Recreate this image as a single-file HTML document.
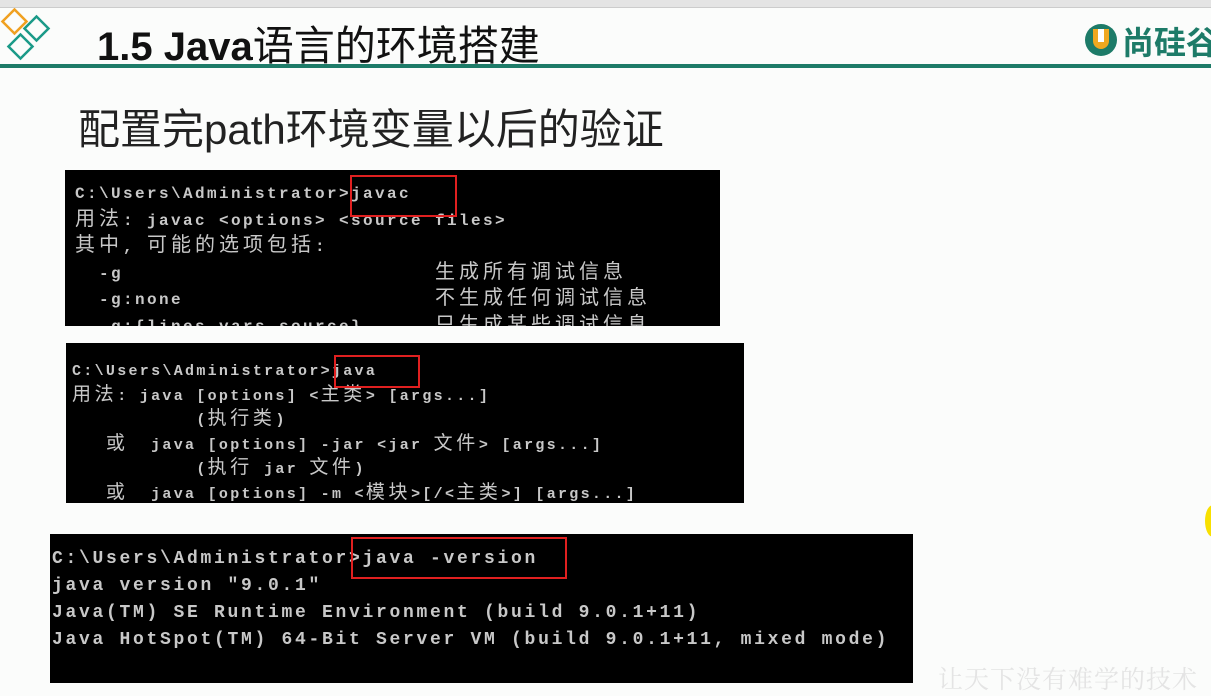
<!DOCTYPE html>
<html><head><meta charset="utf-8"><style>
*{margin:0;padding:0;box-sizing:border-box}
body{width:1211px;height:690px;background:#fbfcfb;position:relative;overflow:hidden;font-family:"Liberation Sans","Noto Sans CJK SC",sans-serif}
.top{position:absolute;left:0;top:0;width:1211px;height:8px;background:#e4e4e4;border-bottom:1px solid #ccc}
.hline{position:absolute;left:0;top:64px;width:1211px;height:4px;background:#1d7b68}
.title{position:absolute;left:97px;top:12px;font-size:40px;font-weight:bold;color:#111;white-space:nowrap}
.title span{font-weight:normal;font-size:41px}
.sub{position:absolute;left:78px;top:96px;font-size:42px;color:#222;white-space:nowrap}
.term{position:absolute;background:#000;overflow:hidden}
.term pre{position:absolute;color:#c8c8c8;font-family:"Liberation Mono","Noto Sans CJK SC",monospace;font-weight:bold;white-space:pre}
.t1 i{font-style:normal;font-weight:normal;font-size:20px;letter-spacing:4px}
.t2 i{font-style:normal;font-weight:normal;font-size:19px;letter-spacing:3.6px}
.box{position:absolute;border:2px solid #e02020}
.logo{position:absolute;left:1122px;top:18px;white-space:nowrap;color:#1d7b68;font-size:32px;font-weight:bold}
.wm{position:absolute;left:938px;top:660px;font-size:25px;color:#e4e4e4;letter-spacing:1px;font-family:"Noto Serif CJK SC",serif;white-space:nowrap}
</style></head><body>
<div class="top"></div>
<svg style="position:absolute;left:0;top:8px" width="62" height="58">
<rect x="6" y="5" width="17" height="17" transform="rotate(45 14.5 13.5)" fill="none" stroke="#f0a020" stroke-width="2.5"/>
<rect x="28" y="12" width="17" height="17" transform="rotate(45 36.5 20.5)" fill="none" stroke="#1a9a88" stroke-width="2.5"/>
<rect x="12" y="30" width="17" height="17" transform="rotate(45 20.5 38.5)" fill="none" stroke="#1a9a88" stroke-width="2.5"/>
</svg>
<div class="title">1.5 Java<span>语言的环境搭建</span></div>
<svg style="position:absolute;left:1084px;top:23px" width="34" height="34"><circle cx="17" cy="17" r="16" fill="#1d7b68"/><path d="M9 6 V18 a8 8 0 0 0 16 0 V6 Z" fill="#f0a820"/><rect x="14" y="6" width="6" height="13" fill="#fff"/></svg>
<div class="logo">尚硅谷</div>
<div class="hline"></div>
<div class="sub">配置完path环境变量以后的验证</div>

<div class="term" style="left:65px;top:170px;width:655px;height:156px">
<pre class="t1" style="left:10px;top:12px;font-size:16px;line-height:25.5px;letter-spacing:2.4px">C:\Users\Administrator>javac
<i>用法</i>: javac &lt;options> &lt;source files>
<i>其中</i>, <i>可能的选项包括</i>:
  -g                          <i>生成所有调试信息</i>
  -g:none                     <i>不生成任何调试信息</i>
  -g:{lines,vars,source}      <i>只生成某些调试信息</i></pre>
</div>
<div class="box" style="left:350px;top:175px;width:107px;height:42px"></div>

<div class="term" style="left:66px;top:343px;width:678px;height:160px">
<pre class="t2" style="left:6px;top:17px;font-size:15px;line-height:23.5px;letter-spacing:2.3px">C:\Users\Administrator>java
<i>用法</i>: java [options] &lt;<i>主类</i>> [args...]
           (<i>执行类</i>)
   <i>或</i>  java [options] -jar &lt;jar <i>文件</i>> [args...]
           (<i>执行</i> jar <i>文件</i>)
   <i>或</i>  java [options] -m &lt;<i>模块</i>>[/&lt;<i>主类</i>>] [args...]</pre>
</div>
<div class="box" style="left:334px;top:355px;width:86px;height:33px"></div>

<div class="term" style="left:50px;top:534px;width:863px;height:149px">
<pre style="left:2px;top:12px;font-size:18px;line-height:27px;letter-spacing:2.7px">C:\Users\Administrator>java -version
java version "9.0.1"
Java(TM) SE Runtime Environment (build 9.0.1+11)
Java HotSpot(TM) 64-Bit Server VM (build 9.0.1+11, mixed mode)</pre>
</div>
<div class="box" style="left:351px;top:537px;width:216px;height:42px"></div>

<div style="position:absolute;left:1205px;top:505px;width:16px;height:32px;border-radius:50%;background:#f8e000"></div>
<div class="wm">让天下没有难学的技术</div>
</body></html>
